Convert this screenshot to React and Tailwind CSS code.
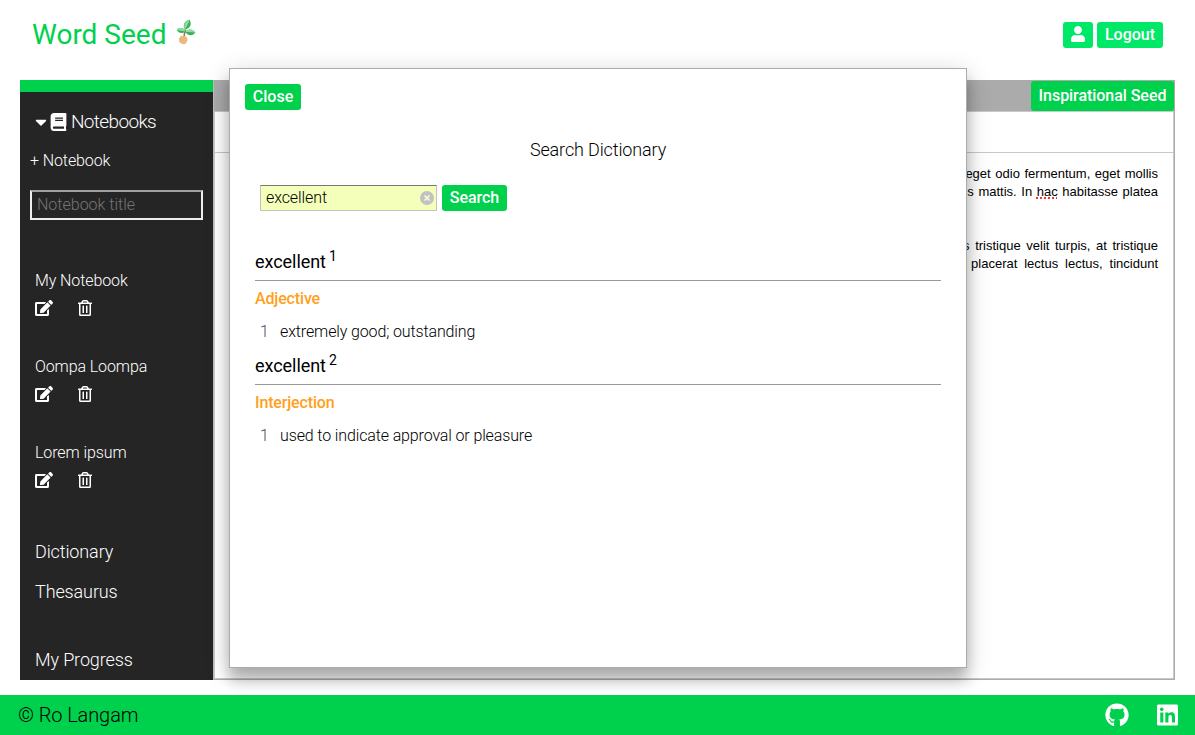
import React from "react";
import { FaBook, FaCaretDown, FaUser, FaGithub, FaLinkedin, FaEdit, FaRegTrashAlt } from "react-icons/fa";

function Sprout() {
  return (
    <svg className="h-[26px] w-[20px]" viewBox="0 0 20 26">
      <path d="M8 18C8.500 15 8.500 12.500 9.500 10.500M8.800 13C11 12.500 13 12.500 15 13" fill="none" stroke="#a9705a" strokeWidth="1.600" />
      <path d="M9 10.500C6.500 6.500 8 2 13.500 0.800C16 5 14.500 9.500 9 10.500Z" fill="#35b35c" />
      <path d="M9 10.500C7 6 9 2.500 13.500 0.800C12.500 4 11 7 9 10.500Z" fill="#8be09b" />
      <path d="M9 12.500C6 15.500 2 14 0.800 10.500C4 8.300 8.500 8.500 9 12.500Z" fill="#35b35c" />
      <path d="M9 12.500C6 12 3 11.500 0.800 10.500C4 8.300 8.500 8.500 9 12.500Z" fill="#8be09b" />
      <path d="M9.500 13C12 9.500 17 10 19.300 13.500C17 17.300 12 17 9.500 13Z" fill="#35b35c" />
      <path d="M9.500 13C12 9.500 17 10 19.300 13.500C16 13 13 12.800 9.500 13Z" fill="#8be09b" />
      <path d="M3 20C3.500 17.500 6 16.300 8.500 17C11.300 17.800 12 20 11 22.500C10.200 24.500 9 25.500 6.500 25C4 24.500 2.500 22.500 3 20Z" fill="#edb978" />
    </svg>
  );
}

const notebooks = ["My Notebook", "Oompa Loompa", "Lorem ipsum"];
const entries = [
  { n: 1, kind: "Adjective", text: "extremely good; outstanding" },
  { n: 2, kind: "Interjection", text: "used to indicate approval or pleasure" },
];

function Sidebar() {
  return (
    <aside className="flex h-[600px] w-[193px] shrink-0 flex-col border-t-[12px] border-[#00d14d] bg-[#252525] font-light text-white">
      <div className="mt-[18px] flex h-6 items-center pl-[15px] text-[19px]">
        <FaCaretDown className="mr-[3px] h-[18px] w-[12px]" />
        <FaBook className="mr-[4px] h-[18px] w-[17px]" />
        <span className="tracking-[-0.65px]">Notebooks</span>
      </div>
      <div className="mt-[17px] h-5 pl-[10px] text-[16px] leading-5 tracking-[-0.1px]">+ Notebook</div>
      <input
        className="mt-[19px] ml-[10px] h-[30px] w-[173px] border-2 border-[#eeeeee] border-t-[#a0a0a0] bg-transparent px-[5px] pb-[2px] text-[16px] font-light outline-none placeholder:text-[#757575]"
        placeholder="Notebook title"
      />
      <div className="mt-[51px] pl-[15px]">
        {notebooks.map((name) => (
          <div key={name} className="h-[86px] text-[16px] leading-5">
            <div className="tracking-[-0.1px]">{name}</div>
            <div className="mt-[9px] flex gap-[25px]">
              <FaEdit className="h-4 w-[18px]" />
              <FaRegTrashAlt className="h-4 w-[14px]" />
            </div>
          </div>
        ))}
      </div>
      <nav className="mt-[11px] flex flex-col pl-[15px] text-[18px] leading-6 tracking-[-0.12px]">
        <span>Dictionary</span>
        <span className="mt-4">Thesaurus</span>
        <span className="mt-[44px]">My Progress</span>
      </nav>
    </aside>
  );
}

function Editor() {
  return (
    <main className="flex h-[600px] w-[962px] flex-col border border-[#ababab] border-l-[#bdbdbd]">
      <div className="flex h-[30px] shrink-0 justify-end bg-[#ababab]">
        <button className="h-[30px] w-[143px] rounded-[3px] bg-[#00d14d] text-[16px] font-medium tracking-[-0.05px] text-white">Inspirational Seed</button>
      </div>
      <div className="h-[42px] shrink-0 border border-[#c8c8c8]" />
      <div className="grow border-x border-b border-[#c8c8c8] pt-[12px] pr-[15px] text-right font-['Liberation_Sans',sans-serif] text-[13px] leading-[18px] text-black">
        <p className="[word-spacing:1px]">eget odio fermentum, eget mollis</p>
        <p className="[word-spacing:1px]">tempus mattis. In <span className="underline decoration-[#ff3030] decoration-dotted decoration-2">hac</span> habitasse platea</p>
        <p className="mt-9 [word-spacing:2px]">lacus tristique velit turpis, at tristique</p>
        <p className="[word-spacing:3.300px]">placerat lectus lectus, tincidunt</p>
      </div>
    </main>
  );
}

function DictionaryModal() {
  return (
    <div className="absolute top-[68px] left-[229px] h-[600px] w-[738px] border border-[#ababab] bg-white shadow-[0_12px_12px_0_rgba(0,0,0,0.22),0_6px_24px_0_rgba(0,0,0,0.2)]">
      <button className="mt-[15px] ml-[15px] block h-[26px] w-[56px] rounded-[3px] bg-[#00d14d] text-[16px] font-medium text-white">Close</button>
      <h2 className="mt-[28px] text-center text-[18px] leading-6 font-light tracking-[-0.13px]">Search Dictionary</h2>
      <form className="mt-[23px] ml-[30px] flex items-center gap-[5px]">
        <div className="flex h-[26px] w-[177px] items-center justify-between border border-[#c3c3c3] border-t-[#777777] bg-[#f4ffba] pr-[2px] pl-[5px] text-[16px] font-light">
          <span className="tracking-[-0.1px]">excellent</span>
          <svg className="size-[14px]" viewBox="0 0 14 14">
            <circle cx="7" cy="7" r="7" fill="#c2c2c2" />
            <path d="M4.500 4.500L9.500 9.500M9.500 4.500L4.500 9.500" stroke="#f7ffd0" strokeWidth="1.600" />
          </svg>
        </div>
        <button type="button" className="h-[26px] w-[65px] rounded-[3px] bg-[#00d14d] text-[16px] font-medium tracking-[-0.05px] text-white">Search</button>
      </form>
      <div className="mt-[39px] ml-[25px] w-[686px]">
        {entries.map((e) => (
          <section key={e.n} className="h-[104px]">
            <h3 className="flex h-[31px] border-b border-[#999999] text-[18px] leading-6 tracking-[-0.05px]">
              excellent<span className="relative -top-[6px] ml-[3px] text-[14px]">{e.n}</span>
            </h3>
            <div className="mt-[8px] text-[16px] leading-5 font-medium tracking-[-0.15px] text-[#ff9f1c]">{e.kind}</div>
            <div className="mt-[13px] flex pl-[5px] text-[16px] leading-5 font-light tracking-[-0.13px]">
              <span className="w-[20px] text-[#554466]">1</span>
              <span>{e.text}</span>
            </div>
          </section>
        ))}
      </div>
    </div>
  );
}

export default function App() {
  return (
    <div className="relative flex h-[735px] w-[1195px] flex-col overflow-hidden bg-white font-[Roboto,sans-serif] text-black">
      <header className="flex h-20 shrink-0 items-start justify-between pr-8 pl-8">
        <h1 className="flex pt-[17px] text-[28px] leading-9 text-[#00d14d]">
          Word Seed
          <span className="mt-[2px] ml-[10px]"><Sprout /></span>
        </h1>
        <div className="flex gap-1 pt-[22px] text-white">
          <button className="flex h-[26px] w-[30px] items-center justify-center rounded-[3px] bg-[#00e868]"><FaUser className="mb-[2px] h-4 w-[14px]" /></button>
          <button className="h-[26px] w-[66px] rounded-[3px] bg-[#00e868] text-[16px] font-medium">Logout</button>
        </div>
      </header>
      <div className="flex px-5">
        <Sidebar />
        <Editor />
      </div>
      <DictionaryModal />
      <footer className="relative mt-[15px] flex h-10 shrink-0 items-center justify-between bg-[#00d14d] pr-[17px] pl-[18px]">
        <span className="text-[20px] font-light tracking-[-0.1px]">© Ro Langam</span>
        <div className="flex gap-[28px] text-white">
          <FaGithub className="h-6 w-6" />
          <FaLinkedin className="h-6 w-[21px]" />
        </div>
      </footer>
    </div>
  );
}
